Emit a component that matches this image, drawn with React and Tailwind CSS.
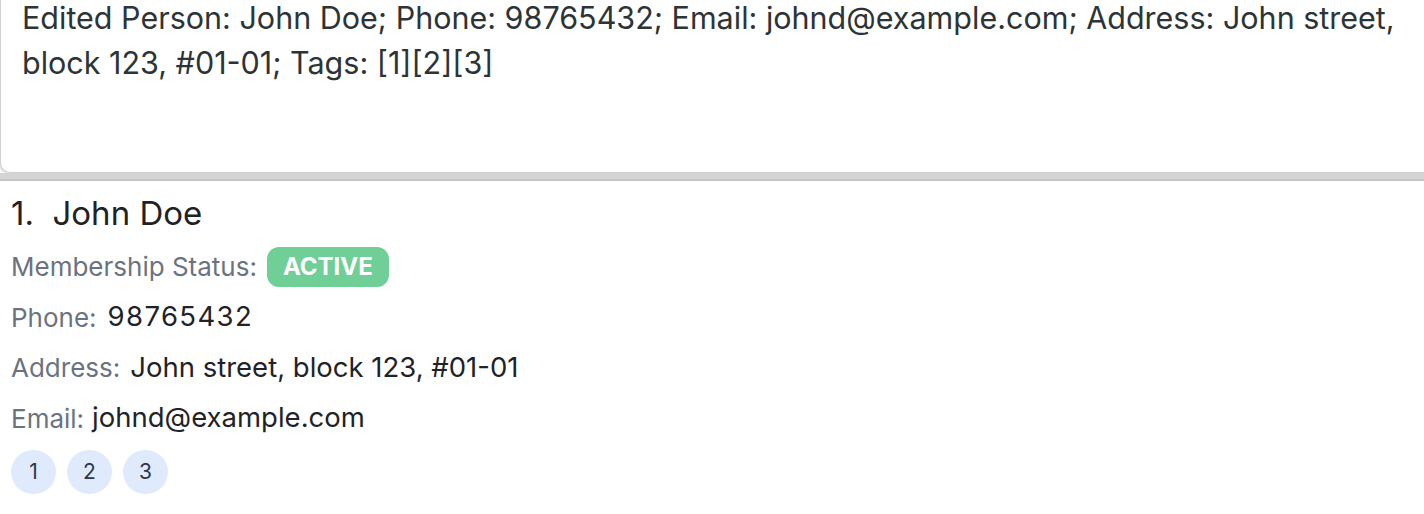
export default function App() {
  const tags = ['1', '2', '3']
  return (
    <div className="h-[514px] w-[1424px] overflow-hidden bg-white" style={{ fontFamily: 'Inter, "Noto Sans", sans-serif' }}>
      {/* result box */}
      <div className="h-[173px] overflow-hidden rounded-bl-[10px] border-b border-l border-[#d0d0d0] bg-white px-[21px] text-[30.5px] leading-[45px] text-[#2d3436] shadow-[-1px_1px_3px_rgba(0,0,0,0.15)]">
        <div className="-mt-[5px]">
          Edited Person: John Doe; Phone: 98765432; Email: johnd@example.com; Address: John street, block 123, #01-01; Tags: [1][2][3]
        </div>
      </div>
      {/* divider */}
      <div className="h-[6px] bg-[#d4d4d4]" />
      <div className="h-[2px] bg-[#c4c4c4]" />

      {/* person card */}
      <div className="px-[11px] pt-[12px]">
        <div className="text-[33px] leading-[40px] text-[#222]">1.&nbsp; John Doe</div>
        <div className="mt-[13px] flex flex-col gap-[9.5px]">
          <div className="flex h-[41px] items-center gap-[10px]">
            <span className="text-[26px] text-[#6b7380]">Membership Status:</span>
            <span className="flex h-[40px] items-center rounded-[12px] bg-[#6fcf97] px-[16px] text-[24px] font-bold text-white">ACTIVE</span>
          </div>
          <Row label="Phone:" value="98765432" gap="gap-[11px]" valueCls="tracking-[0.05em]" />
          <Row label="Address:" value="John street, block 123, #01-01" gap="gap-[10px]" />
          <Row label="Email:" value="johnd@example.com" gap="gap-[8px]" />
        </div>
        <div className="mt-[11.5px] flex gap-[11px]">
          {tags.map((t) => (
            <span key={t} className="flex h-[44px] w-[45px] items-center justify-center rounded-full bg-[#dfebfd] text-[21px] text-[#2d3748]">{t}</span>
          ))}
        </div>
      </div>
    </div>
  )
}

function Row({ label, value, gap, valueCls = '' }) {
  return (
    <div className={`flex h-[41px] items-center ${gap}`}>
      <span className="text-[26px] text-[#6b7380]">{label}</span>
      <span className={`text-[27.5px] text-[#1f2329] ${valueCls}`}>{value}</span>
    </div>
  )
}
